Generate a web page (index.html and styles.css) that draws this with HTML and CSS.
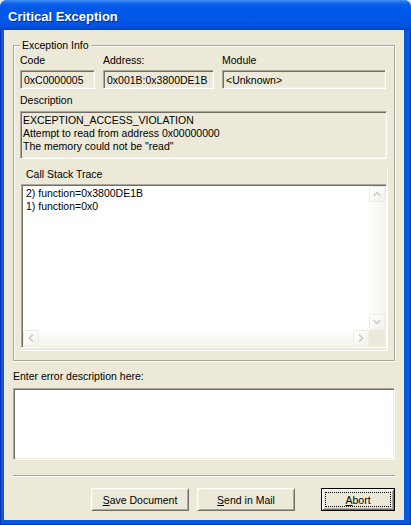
FILE: index.html
```html
<!DOCTYPE html>
<html>
<head>
<meta charset="utf-8">
<link rel="stylesheet" href="styles.css">
</head>
<body>
<div class="window">
  <div class="titlebar"><span class="title">Critical Exception</span></div>
  <div class="frame">
    <div class="client">
      <fieldset class="group">
        <legend>Exception Info</legend>
        <div class="fields">
          <div class="field"><div class="label">Code</div><div class="edit">0xC0000005</div></div>
          <div class="field"><div class="label">Address:</div><div class="edit">0x001B:0x3800DE1B</div></div>
          <div class="field"><div class="label">Module</div><div class="edit">&lt;Unknown&gt;</div></div>
        </div>
        <div class="label desc-label">Description</div>
        <div class="edit multi">EXCEPTION_ACCESS_VIOLATION<br>Attempt to read from address 0x00000000<br>The memory could not be "read"</div>
        <div class="stack">
          <div class="label stack-label">Call Stack Trace</div>
          <div class="listbox">
            <div class="list-body">2) function=0x3800DE1B<br>1) function=0x0</div>
            <div class="vscroll">
              <div class="sbtn"><svg width="8" height="6" viewBox="0 0 8 6"><path d="M0.5 4.8 L4 1.5 L7.5 4.8" fill="none" stroke="#cfcdc1" stroke-width="1.6"/></svg></div>
              <div class="track"></div>
              <div class="sbtn"><svg width="8" height="6" viewBox="0 0 8 6"><path d="M0.5 1.2 L4 4.5 L7.5 1.2" fill="none" stroke="#cfcdc1" stroke-width="1.6"/></svg></div>
            </div>
            <div class="hscroll">
              <div class="sbtn"><svg width="6" height="8" viewBox="0 0 6 8"><path d="M4.8 0.5 L1.5 4 L4.8 7.5" fill="none" stroke="#cfcdc1" stroke-width="1.6"/></svg></div>
              <div class="track h"></div>
              <div class="sbtn"><svg width="6" height="8" viewBox="0 0 6 8"><path d="M1.2 0.5 L4.5 4 L1.2 7.5" fill="none" stroke="#cfcdc1" stroke-width="1.6"/></svg></div>
            </div>
            <div class="corner"></div>
          </div>
        </div>
      </fieldset>
      <div class="label enter-label">Enter error description here:</div>
      <div class="textarea"></div>
      <div class="separator"></div>
      <div class="buttons">
        <button class="btn save"><u>S</u>ave Document</button>
        <button class="btn mail"><u>S</u>end in Mail</button>
        <button class="btn abort"><span class="focus"><u>A</u>bort</span></button>
      </div>
    </div>
  </div>
</div>
</body>
</html>
```
FILE: styles.css
```css
* { box-sizing: border-box; }
html, body { margin: 0; padding: 0; }
body {
  width: 411px;
  height: 525px;
  overflow: hidden;
  background: #dfe6f2;
  font-family: "Liberation Sans", Arial, sans-serif;
  font-size: 10.5px;
  color: #000;
}
.window {
  width: 411px;
  height: 525px;
  display: flex;
  flex-direction: column;
  border-radius: 7px 7px 0 0;
  overflow: hidden;
  background: #0858e0;
}
.titlebar {
  height: 30px;
  flex: none;
  display: flex;
  align-items: center;
  padding: 2px 0 0 8px;
  background: linear-gradient(to bottom, #3f8ff5 0px, #2476f2 2px, #0b60ea 4px, #0058e8 9px, #0058ea 20px, #0152e0 26px, #0046c9 30px);
}
.title {
  color: #fff;
  font-family: "Liberation Sans", Arial, sans-serif;
  font-weight: bold;
  font-size: 13px;
  text-shadow: 1px 1px 0 #0b2a8c;
}
.frame {
  flex: 1;
  display: flex;
  padding: 0 7px 5px 4px;
  background: #0858e0;
  box-shadow: inset 1px 0 #0634b0, inset -1px 0 #0634b0, inset 0 -1px #0634b0;
}
.client {
  flex: 1;
  display: flex;
  flex-direction: column;
  background: #ece9d8;
  padding: 8px 9px 0 9px;
}
.group {
  margin: 0;
  padding: 2px 6px 9px 6px;
  min-width: 0;
  border: 1px solid #aca899;
  box-shadow: inset 1px 1px 0 #fff, 1px 1px 0 #fff;
}
.group legend {
  padding: 0 2px;
  line-height: 14px;
  background: #ece9d8;
}
.label {
  line-height: 13px;
  white-space: nowrap;
}
.fields {
  display: grid;
  grid-template-columns: 75px 111px 164px;
  column-gap: 8px;
}
.field .label { margin-bottom: 3px; }
.edit {
  height: 19px;
  line-height: 13px;
  padding: 3px 3px 1px 3px;
  border: 1px solid;
  border-color: #aca899 #fff #fff #aca899;
  box-shadow: inset 1px 1px 0 #716f64, inset -1px -1px 0 #f1efe2;
  white-space: nowrap;
  overflow: hidden;
}
.desc-label { margin-top: 5px; margin-bottom: 4px; }
.edit.multi {
  height: 48px;
  padding: 2px 2px 5px 2px;
  margin-right: 1px;
}
.stack {
  margin-top: 9px;
  padding: 0 0 2px 1px;
  border-right: 1px solid #fff;
  border-bottom: 1px solid #fff;
}
.stack-label { padding-left: 5px; margin-bottom: 3px; }
.listbox {
  height: 164px;
  border: 1px solid;
  border-color: #aca899 #fff #fff #aca899;
  box-shadow: inset 1px 1px 0 #716f64, inset -1px -1px 0 #f1efe2;
  padding: 1px;
  background: #fff;
  display: grid;
  grid-template-columns: 1fr 16px;
  grid-template-rows: 1fr 16px;
}
.list-body {
  padding: 1px 3px;
  line-height: 13px;
  background: #fff;
}
.vscroll, .hscroll {
  display: flex;
  background: linear-gradient(to right, #fdfdfb, #f6f5ef);
}
.vscroll { flex-direction: column; }
.hscroll {
  grid-column: 1;
  background: linear-gradient(to bottom, #fdfdfb, #f6f5ef);
}
.track { flex: 1; }
.sbtn {
  width: 16px;
  height: 16px;
  flex: none;
  display: flex;
  align-items: center;
  justify-content: center;
  border: 1px solid #eeede5;
  border-radius: 2px;
  background: linear-gradient(to bottom right, #ffffff, #f3f2ec);
}
.corner { background: #ece9d8; }
.enter-label { margin-top: 9px; margin-bottom: 5px; padding-left: 0; }
.textarea {
  height: 72px;
  background: #fff;
  border: 1px solid;
  border-color: #aca899 #fff #fff #aca899;
  box-shadow: inset 1px 1px 0 #716f64, inset -1px -1px 0 #f1efe2;
}
.separator {
  margin-top: 15px;
  height: 2px;
  border-top: 1px solid #aca899;
  border-bottom: 1px solid #fff;
}
.buttons {
  margin-top: 11px;
  display: flex;
  justify-content: flex-end;
  padding-right: 0;
}
.btn {
  height: 23px;
  margin: 0;
  padding: 0;
  font-family: "Liberation Sans", Arial, sans-serif;
  font-size: 10.5px;
  color: #000;
  background: #ece9d8;
  border: 1px solid;
  border-color: #fff #716f64 #716f64 #fff;
  box-shadow: inset 1px 1px 0 #f1efe2, inset -1px -1px 0 #aca899;
  display: flex;
  align-items: center;
  justify-content: center;
}
.save { width: 98px; }
.mail { width: 98px; margin-left: 8px; }
.abort {
  width: 74px;
  margin-left: 26px;
  border: 1px solid #000;
  box-shadow: inset 1px 1px 0 #fff, inset -1px -1px 0 #716f64, inset 2px 2px 0 #f1efe2, inset -2px -2px 0 #aca899;
  padding: 3px;
}
.focus {
  flex: 1;
  align-self: stretch;
  display: flex;
  align-items: center;
  justify-content: center;
  border: 1px dotted #000;
}
```
